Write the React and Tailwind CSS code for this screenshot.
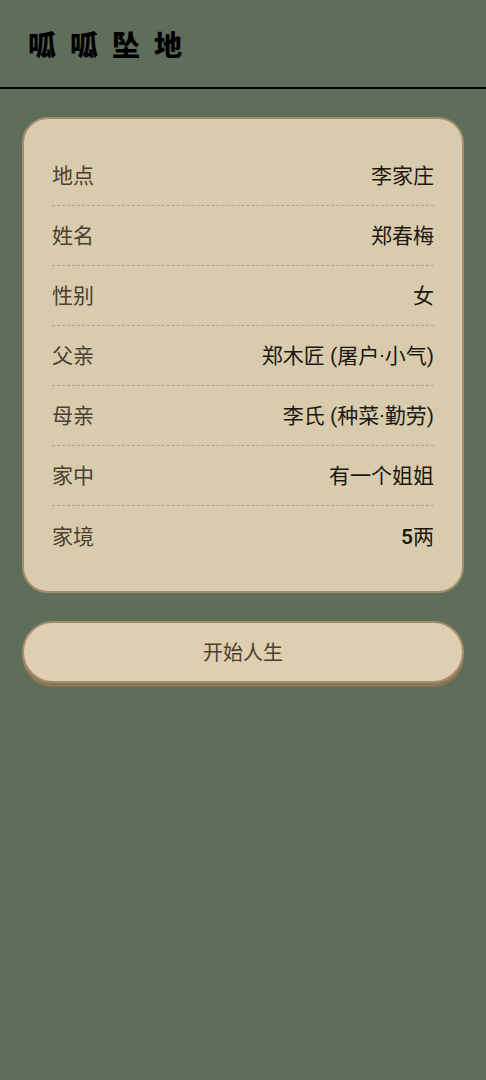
import React from "react";

const rows = [
  ["地点", "李家庄"],
  ["姓名", "郑春梅"],
  ["性别", "女"],
  ["父亲", "郑木匠 (屠户·小气)"],
  ["母亲", "李氏 (种菜·勤劳)"],
  ["家中", "有一个姐姐"],
  ["家境", <><span className="font-semibold">5</span>两</>],
];

export default function App() {
  return (
    <div
      className="min-h-[1080px] w-full bg-[#5e6e5b]"
      style={{ fontFamily: 'Roboto, "Noto Sans CJK SC", sans-serif' }}
    >
      <header className="h-[89px] border-b-2 border-black flex items-center pl-[28px]">
        <h1
          className="text-[28px] font-black tracking-[14px] text-black leading-none"
          style={{ fontFamily: '"Noto Sans CJK SC", sans-serif' }}
        >
          呱呱坠地
        </h1>
      </header>
      <main className="px-[22px] pt-[28px] flex flex-col gap-[28px]">
        <div className="rounded-[26px] border-2 border-[#a48d69] bg-[#d9cbad] px-[28px] pt-[27px] pb-[25px]">
          {rows.map(([k, v], i) => (
            <div
              key={k}
              className={
                "flex justify-between items-center h-[60px] pt-[3px] text-[21px] " +
                (i < rows.length - 1 ? "border-b border-dashed border-[#b3a386]" : "")
              }
            >
              <span className="text-[#4b4132]">{k}</span>
              <span className="text-[#1d1912]">{v}</span>
            </div>
          ))}
        </div>
        <button className="h-[62px] pt-[2px] rounded-full border-2 border-[#a48d69] bg-[#dfceb0] shadow-[0_4px_0_#8c7656] text-[20px] text-[#4b4132]">
          开始人生
        </button>
      </main>
    </div>
  );
}
